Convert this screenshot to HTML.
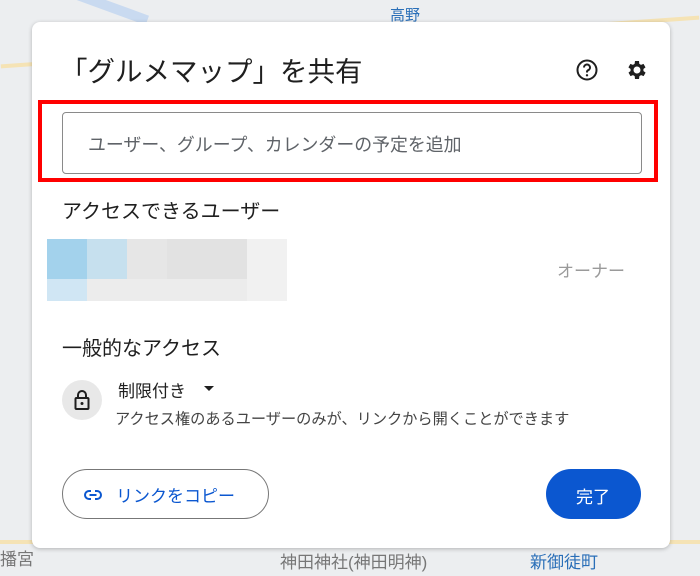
<!DOCTYPE html>
<html><head><meta charset="utf-8"><style>
*{margin:0;padding:0;box-sizing:border-box}
body{width:700px;height:576px;overflow:hidden;position:relative;background:#eceef0;font-family:"Liberation Sans","Noto Sans CJK JP",sans-serif;color:#1f1f1f}
.a{position:absolute;white-space:nowrap}
.map{position:absolute;background:#f7f1df}
</style></head><body>
<div class="map" style="left:0;top:40px;width:700px;height:4px;background:#f5e3b5;transform:rotate(-4deg)"></div>
<div class="map" style="left:60px;top:0;width:90px;height:10px;background:#c9daf0;transform:rotate(20deg)"></div>
<div class="map" style="left:0;top:540px;width:700px;height:4px;background:#f5e3b5"></div>
<div class="a" style="left:280px;top:548px;font-size:17px;color:#777">神田神社(神田明神)</div>
<div class="a" style="left:530px;top:548px;font-size:17px;color:#2a6fb8">新御徒町</div>
<div class="a" style="left:390px;top:4px;font-size:15px;color:#2a6fb8">高野</div>
<div class="a" style="left:0;top:545px;font-size:17px;color:#777">播宮</div>
<div class="a" style="left:32px;top:22px;width:638px;height:526px;background:#fff;border-radius:8px;box-shadow:0 1px 4px rgba(0,0,0,.25)"></div>
<div class="a" style="left:60px;top:49px;font-size:27.5px;color:#1f1f1f">「グルメマップ」を共有</div>
<svg class="a" style="left:575px;top:58px" width="24" height="24" viewBox="0 0 24 24"><circle cx="12" cy="12" r="9.5" fill="none" stroke="#1f1f1f" stroke-width="2"/><path d="M9 9.5a3 3 0 1 1 4.2 2.7c-.8.4-1.2 1-1.2 1.8v.5" fill="none" stroke="#1f1f1f" stroke-width="2"/><circle cx="12" cy="17.3" r="1.2" fill="#1f1f1f"/></svg>
<svg class="a" style="left:625px;top:58px" width="24" height="24" viewBox="0 0 24 24"><path fill="#1f1f1f" d="M19.4 13a7.5 7.5 0 0 0 0-2l2.1-1.6-2-3.5-2.5 1a7 7 0 0 0-1.7-1L15 3h-4l-.4 2.9a7 7 0 0 0-1.7 1l-2.5-1-2 3.5L6.6 11a7.5 7.5 0 0 0 0 2l-2.1 1.6 2 3.5 2.5-1a7 7 0 0 0 1.7 1L11 21h4l.4-2.9a7 7 0 0 0 1.7-1l2.5 1 2-3.5zM13 15.5a3.5 3.5 0 1 1 0-7 3.5 3.5 0 0 1 0 7z" transform="translate(-1 0)"/></svg>
<div class="a" style="left:38px;top:100px;width:620px;height:82px;border:4px solid #f00"></div>
<div class="a" style="left:62px;top:112px;width:580px;height:62px;border:1px solid #8a8a8a;border-radius:4px"></div>
<div class="a" style="left:88px;top:131px;font-size:17.9px;color:#5f6368">ユーザー、グループ、カレンダーの予定を追加</div>
<div class="a" style="left:62px;top:195px;font-size:20px">アクセスできるユーザー</div>
<div class="a" style="left:47px;top:239px;width:40px;height:40px;background:#a3d2ec"></div>
<div class="a" style="left:87px;top:239px;width:40px;height:40px;background:#c6e0ee"></div>
<div class="a" style="left:127px;top:239px;width:40px;height:40px;background:#e6e6e6"></div>
<div class="a" style="left:167px;top:239px;width:80px;height:40px;background:#e2e2e2"></div>
<div class="a" style="left:247px;top:239px;width:40px;height:62px;background:#f1f1f1"></div>
<div class="a" style="left:47px;top:279px;width:40px;height:22px;background:#d0e6f4"></div>
<div class="a" style="left:87px;top:279px;width:160px;height:22px;background:#ececec"></div>
<div class="a" style="left:557px;top:257px;font-size:17px;color:#9a9a9a">オーナー</div>
<div class="a" style="left:62px;top:332px;font-size:20px">一般的なアクセス</div>
<div class="a" style="left:62px;top:380px;width:40px;height:40px;border-radius:50%;background:#e8e8e8"></div>
<svg class="a" style="left:72px;top:388px" width="20" height="24" viewBox="0 0 20 24"><path d="M6 10V7a4 4 0 0 1 8 0v3" fill="none" stroke="#1f1f1f" stroke-width="2"/><rect x="3.5" y="10" width="13" height="11" rx="1" fill="none" stroke="#1f1f1f" stroke-width="2"/><circle cx="10" cy="15.5" r="1.5" fill="#1f1f1f"/></svg>
<div class="a" style="left:118px;top:377px;font-size:17px">制限付き</div>
<div class="a" style="left:204px;top:386px;width:0;height:0;border-left:5px solid transparent;border-right:5px solid transparent;border-top:5px solid #1f1f1f"></div>
<div class="a" style="left:115px;top:407px;font-size:15.2px;color:#444">アクセス権のあるユーザーのみが、リンクから開くことができます</div>
<div class="a" style="left:62px;top:469px;width:207px;height:50px;border:1px solid #777;border-radius:25px"></div>
<svg class="a" style="left:83px;top:485px" width="20" height="20" viewBox="0 0 20 20"><path d="M8 6H6a4 4 0 0 0 0 8h2M12 6h2a4 4 0 0 1 0 8h-2M6.5 10h7" fill="none" stroke="#0b57d0" stroke-width="2"/></svg>
<div class="a" style="left:116px;top:482px;font-size:17px;color:#0b57d0">リンクをコピー</div>
<div class="a" style="left:546px;top:469px;width:95px;height:50px;border-radius:25px;background:#0b57d0"></div>
<div class="a" style="left:576px;top:483px;font-size:17px;color:#fff">完了</div>
</body></html>
